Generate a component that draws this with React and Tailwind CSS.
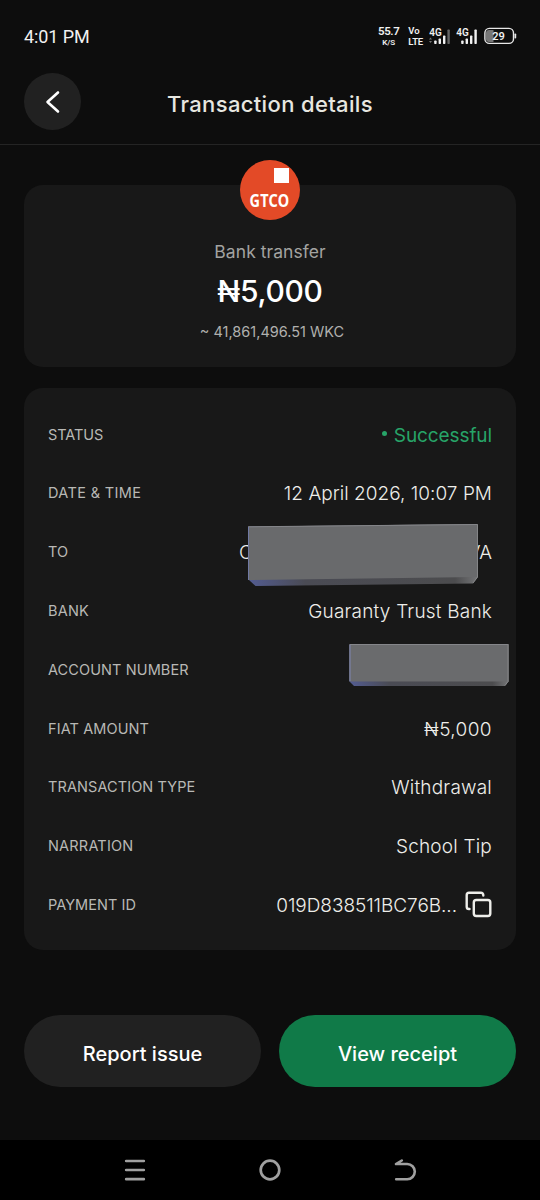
import React from 'react';

const details = [
  { label: 'Status', value: 'Successful', type: 'status', labelClass: 'tracking-[-0.05px]', valueClass: 'tracking-[-0.1px]' },
  { label: 'Date & Time', value: '12 April 2026, 10:07 PM', labelClass: 'tracking-[0.35px]', valueClass: 'tracking-[0.03px]' },
  { label: 'To', type: 'recipient', labelClass: 'tracking-[0.1px]' },
  { label: 'Bank', value: 'Guaranty Trust Bank', labelClass: 'tracking-[0.2px]', valueClass: 'tracking-[0.2px]' },
  { label: 'Account Number', type: 'account', labelClass: 'tracking-[0.1px]' },
  { label: 'Fiat Amount', value: '₦5,000', labelClass: 'tracking-[0.1px]', valueClass: 'tracking-[0.4px]' },
  { label: 'Transaction Type', value: 'Withdrawal', labelClass: 'tracking-[0.1px]', valueClass: 'tracking-[0.2px]' },
  { label: 'Narration', value: 'School Tip', labelClass: 'tracking-[0.2px]', valueClass: 'tracking-[0.2px]' },
  { label: 'Payment ID', value: '019D838511BC76B...', type: 'copy', labelClass: 'tracking-[0.05px]', valueClass: 'tracking-[-0.05px]' },
];

const SignalIcon = ({ weak }) => (
  <svg width="22" height="22" viewBox="0 -4 22 22" fill="#f1f1f1">
    <text x="0.2" y="9.2" fontFamily="Roboto" fontSize="11.5" fontWeight="600" textLength="12.5" lengthAdjust="spacingAndGlyphs">4G</text>
    {weak && <path d="M0 12.5l1.5-2 1.5 2zM0 14l1.5 2L3 14z" fill="#777" />}
    <rect x="5.2" y="13.5" width="2.4" height="3.5" rx="0.7" />
    <rect x="9.6" y="11.5" width="2.4" height="5.5" rx="0.7" />
    <rect x="14" y="8.5" width="2.4" height="8.5" rx="0.7" />
    <rect x="18.4" y="2.5" width="2.4" height="14.5" rx="0.7" fill={weak ? '#666' : '#f1f1f1'} />
  </svg>
);

const StatusBar = () => (
  <div className="flex h-[73px] items-start justify-between pl-6 pr-[23px] pt-[23px] font-[Roboto] text-[#f1f1f1]">
    <span className="pt-[2px] text-[18px] leading-[24px] tracking-[-0.1px]">4:01 PM</span>
    <div className="flex items-start">
      <div className="mr-[9px] flex flex-col items-center pt-[1px] font-semibold">
        <span className="text-[11.5px] leading-[14px] tracking-[-0.4px]">55.7</span>
        <span className="text-[8px] leading-[9px]">K/S</span>
      </div>
      <div className="mr-[6px] flex flex-col pt-[2px] font-semibold">
        <span className="text-[9.5px] leading-[11px]">Vo</span>
        <span className="text-[9.5px] leading-[11px] tracking-[-0.2px]">LTE</span>
      </div>
      <div className="mr-[5px]"><SignalIcon weak /></div>
      <div className="mr-[6px]"><SignalIcon /></div>
      <svg className="mt-[4px]" width="33" height="18" viewBox="0 0 33 18">
        <path d="M5 3h4.500v12H5a3 3 0 0 1-3-3V6a3 3 0 0 1 3-3z" fill="#777" />
        <rect x="0.9" y="1.4" width="28.6" height="15" rx="4.5" fill="none" stroke="#e8e8e8" strokeWidth="1.4" />
        <rect x="30.5" y="6.5" width="1.7" height="5" rx="0.8" fill="#e8e8e8" />
        <text x="14.5" y="12.8" textAnchor="middle" fontFamily="Roboto" fontSize="11" fontWeight="600" fill="#f1f1f1">29</text>
      </svg>
    </div>
  </div>
);

const Header = () => (
  <header className="grid h-[72px] grid-cols-[57px_1fr_57px] items-start border-b border-[#242424] px-6">
    <button className="flex size-[57px] items-center justify-center rounded-full bg-[#212121]" aria-label="Back">
      <svg width="24" height="24" viewBox="0 0 24 24" fill="none" stroke="#fff" strokeWidth="2.6" strokeLinecap="round" strokeLinejoin="round">
        <path d="M17 2.500L6.500 12L17 21.500" />
      </svg>
    </button>
    <h1 className="whitespace-nowrap pt-[17px] text-center text-[22px] font-medium leading-[28px] tracking-[0.35px] text-[#e7e7e0]">
      Transaction details
    </h1>
  </header>
);

const Cover = ({ tilted }) => {
  if (tilted) {
    return (
      <svg className="absolute right-[13px] top-[0px]" width="232" height="64" viewBox="0 0 232 64">
        <defs>
          <linearGradient id="edgeA" x1="0" x2="1" y1="0" y2="0">
            <stop offset="0" stopColor="#535c91" />
            <stop offset="0.25" stopColor="#4a4b54" />
            <stop offset="0.9" stopColor="#4c4c4e" />
            <stop offset="1" stopColor="#747577" />
          </linearGradient>
        </defs>
        <path d="M1 3.500L230.500 1L231 54L226 60.500L8.500 63L2 57z" fill="url(#edgeA)" />
        <path d="M1 3.500L230.500 1L231 54L2 57z" fill="#696a6c" />
        <path d="M1.500 57V3.800L230.500 1.500" fill="none" stroke="#85868a" strokeWidth="1" />
        <path d="M1.500 57V4" stroke="#7079a3" strokeWidth="1" />
        <path d="M230.500 1.500V54L226 60" fill="none" stroke="#848587" strokeWidth="1" />
      </svg>
    );
  }
  return (
    <svg className="absolute right-[-17px] top-[3px]" width="160" height="44" viewBox="0 0 160 44">
      <defs>
        <linearGradient id="edgeB" x1="0" x2="1" y1="0" y2="0">
          <stop offset="0" stopColor="#535c91" />
          <stop offset="0.25" stopColor="#4a4b54" />
          <stop offset="0.9" stopColor="#4c4c4e" />
          <stop offset="1" stopColor="#747577" />
        </linearGradient>
      </defs>
      <path d="M0.500 1H159.500V38.500L156 43H5L0.500 38.500z" fill="url(#edgeB)" />
      <path d="M0.500 1H159.500V38.500H0.500z" fill="#6a6b6d" />
      <path d="M1 38V1.500H159" fill="none" stroke="#85868a" strokeWidth="1" />
      <path d="M1 38V2" stroke="#7079a3" strokeWidth="1" />
      <path d="M159 1.500V38.500L156 42.500" fill="none" stroke="#848587" strokeWidth="1" />
    </svg>
  );
};

const CopyIcon = () => (
  <svg width="27" height="27" viewBox="0 0 27 27" fill="none" stroke="#eeeeea" strokeWidth="2.4" strokeLinecap="round" strokeLinejoin="round">
    <rect x="8.800" y="9" width="16.500" height="16" rx="2.500" />
    <path d="M4.500 18H4a2.300 2.300 0 0 1-2.300-2.300V4A2.300 2.300 0 0 1 4 1.700H16A2.300 2.300 0 0 1 18.300 4V4.500" />
  </svg>
);

const DetailRow = ({ label, value, type, labelClass, valueClass }) => (
  <div className="relative flex h-[58.8px] items-center justify-between">
    <span className={`text-[14.5px] uppercase text-[#b8b8b5] ${labelClass}`}>{label}</span>
    {type === 'status' && (
      <span className="flex items-center gap-[7px] pt-[4px] text-[#27a468]">
        <span className="mb-[5px] size-[5px] rounded-full bg-[#27a468]" />
        <span className={`text-[19px] ${valueClass}`}>{value}</span>
      </span>
    )}
    {type === 'recipient' && (
      <>
        <span className="flex w-[253px] justify-between pt-[3px] text-[19px] font-light text-[#eeeeea]">
          <span>C</span>
          <span>VA</span>
        </span>
        <Cover tilted />
      </>
    )}
    {type === 'account' && <Cover />}
    {type === 'copy' && (
      <span className="flex items-center gap-[8px]">
        <span className={`pt-[3px] text-[19px] font-light text-[#eeeeea] ${valueClass}`}>{value}</span>
        <CopyIcon />
      </span>
    )}
    {!type && <span className={`pt-[3px] text-[19px] font-light text-[#eeeeea] ${valueClass}`}>{value}</span>}
  </div>
);

const NavBar = () => (
  <nav className="flex h-[60px] items-center justify-center gap-[111px] bg-black">
    <svg width="24" height="24" viewBox="0 0 24 24" stroke="#a0a0a0" strokeWidth="2.700" strokeLinecap="round">
      <path d="M3.200 3H20.800M3.200 12H20.800M3.200 21.200H20.800" />
    </svg>
    <svg width="24" height="24" viewBox="0 0 24 24" fill="none" stroke="#a0a0a0" strokeWidth="2.700">
      <circle cx="12" cy="12" r="9.300" />
    </svg>
    <svg width="24" height="24" viewBox="0 0 24 24" fill="none" stroke="#a0a0a0" strokeWidth="2.600" strokeLinecap="round" strokeLinejoin="round">
      <path d="M8.800 2.500L3 6H14.200A7.600 7.600 0 0 1 14.200 21.200H3.200" />
    </svg>
  </nav>
);

const App = () => {
  return (
    <div className="flex h-[1200px] w-[540px] flex-col overflow-hidden bg-[#0d0d0d] font-[Inter,sans-serif]">
      <StatusBar />
      <Header />
      <main className="flex flex-1 flex-col px-6 pt-[40px]">
        <section className="flex h-[182px] flex-col items-center rounded-[19px] bg-[#181818]">
          <div className="mt-[-25px] flex size-[60px] shrink-0 flex-col items-center rounded-full bg-[#e34a27] pt-[8px]">
            <span className="ml-[22px] size-[15px] bg-white" />
            <span className="mt-[7px] origin-center scale-x-[0.78] font-['Noto_Sans'] text-[18.5px] font-bold leading-[20px] tracking-[0.3px] text-white">
              GTCO
            </span>
          </div>
          <p className="mt-[19px] text-[17.500px] leading-[26px] tracking-[0.05px] text-[#a3a3a1]">Bank transfer</p>
          <p className="mt-[6px] text-[30px] font-medium leading-[40px] tracking-[-0.3px] text-white">₦5,000</p>
          <p className="mt-[11px] pl-[4px] text-[14.5px] leading-[20px] text-[#b0b0ae]">~ 41,861,496.51 WKC</p>
        </section>
        <section className="mt-[21px] h-[562px] rounded-[19px] bg-[#181818] px-6 pt-[17px]">
          {details.map(item => (
            <DetailRow key={item.label} {...item} />
          ))}
        </section>
        <div className="mt-[65px] grid grid-cols-2 gap-[18px]">
          <button className="h-[72px] rounded-full bg-[#212121] pt-[5px] text-[20px] font-medium text-white">Report issue</button>
          <button className="h-[72px] rounded-full bg-[#107a48] pt-[5px] text-[20px] font-medium text-white">View receipt</button>
        </div>
      </main>
      <NavBar />
    </div>
  );
};

export default App;
